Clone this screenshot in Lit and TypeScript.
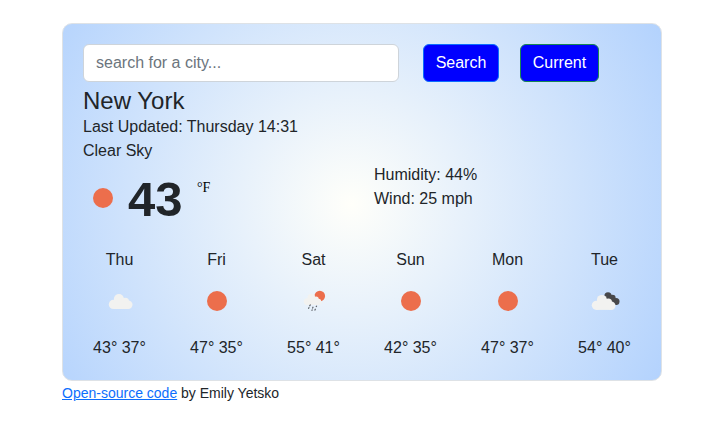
import { LitElement, html, css, svg } from "lit";
import { customElement } from "lit/decorators.js";

type Icon = "sun" | "cloud" | "rain" | "broken";

const cloud = (transform: string) => svg`
  <g transform=${transform} fill="#f2f2f0">
    <circle cx="18.4" cy="28.4" r="4.6"/>
    <circle cx="23.9" cy="23" r="5"/>
    <circle cx="30.3" cy="25.4" r="3.7"/>
    <circle cx="33.3" cy="28.8" r="4.2"/>
    <path d="M18.4 25h15v8h-15z"/>
  </g>`;

const shapes = {
  sun: svg`<circle cx="25" cy="25" r="10" fill="#ec6e4c"/>`,
  cloud: cloud(""),
  rain: svg`
    <circle cx="30.8" cy="20" r="5.3" fill="#ec6e4c"/>
    ${cloud("translate(4.6 4.3) scale(.74 .75)")}
    <path d="M21.5 28.5l-1 1.8M20.2 31.200l-.8 1.6M24.200 30.8l-.8 1.6M27.8 29.7l-.8 1.4M23.4 33.4l-.7 1.4M26.5 32.8l-.8 1.6" stroke="#54585e" stroke-width="1.1" fill="none"/>`,
  broken: svg`
    <g fill="#48484a">
      <circle cx="28" cy="19.9" r="3.6"/>
      <circle cx="32.3" cy="22.2" r="3.4"/>
      <circle cx="36" cy="25.6" r="3.5"/>
      <path d="M25 21l6-1 6 5v4h-5z"/>
    </g>
    ${cloud("translate(-2 .9)")}`,
};

const icon = (name: Icon) =>
  html`<svg class="icon" viewBox="0 0 50 50" aria-hidden="true">${shapes[name]}</svg>`;

const forecast: { day: string; icon: Icon; max: number; min: number }[] = [
  { day: "Thu", icon: "cloud", max: 43, min: 37 },
  { day: "Fri", icon: "sun", max: 47, min: 35 },
  { day: "Sat", icon: "rain", max: 55, min: 41 },
  { day: "Sun", icon: "sun", max: 42, min: 35 },
  { day: "Mon", icon: "sun", max: 47, min: 37 },
  { day: "Tue", icon: "broken", max: 54, min: 40 },
];

@customElement("app-root")
export class AppRoot extends LitElement {
  static styles = css`
    :host {
      display: block;
      width: 600px;
      margin: 0 auto;
      padding: 23px 0 0 5px;
      font: 16px/24px "Liberation Sans", Arial, sans-serif;
      color: #212529;
    }
    * { box-sizing: border-box; }
    .card {
      height: 358px;
      padding: 20px;
      border: 1px solid #dee2e6;
      border-radius: 10px;
      background: radial-gradient(circle at 48.2% 50.5%, rgb(255, 255, 250) 0%, rgb(160, 199, 254) 125%);
    }
    .search { display: flex; }
    .field {
      width: 316px;
      height: 38px;
      margin-right: 24px;
      padding: 6px 12px;
      border: 1px solid #ced4da;
      border-radius: 6px;
      background: #fff;
      font: inherit;
    }
    .field::placeholder { color: #6c757d; opacity: 1; }
    .button {
      width: 76px;
      height: 38px;
      margin-right: 21px;
      padding: 6px 0;
      border: 1px solid #0d6efd;
      border-radius: 6px;
      background: #00f;
      color: #fff;
      font: inherit;
    }
    .button.current { width: 79px; border-color: #198754; }
    .city { margin: 4px 0 0; font-size: 24px; line-height: 29px; font-weight: 400; }
    .now { display: grid; grid-template-columns: 291px 1fr; height: 72px; }
    .reading { display: flex; align-items: flex-start; }
    .reading .icon { margin: 10px 0 0 -5px; }
    .temperature { font-size: 49px; line-height: 72px; font-weight: 700; }
    .unit { margin: 13px 0 0 14.5px; font: 14px/24px "Liberation Serif", serif; color: #000; }
    .icon { display: block; width: 50px; height: 50px; flex: none; }
    .forecast { display: grid; grid-template-columns: repeat(6, 1fr); margin: 13px -12px 0; }
    .day { display: flex; flex-direction: column; align-items: center; }
    .day .icon { margin: 4px 0 10px; }
    .credit { font-size: 14px; line-height: 24px; }
    .credit a { color: #0d6efd; text-decoration: underline; }
  `;

  render() {
    return html`
      <section class="card">
        <form class="search" @submit=${(e: Event) => e.preventDefault()}>
          <input class="field" type="search" placeholder="search for a city..." />
          <button class="button">Search</button>
          <button class="button current" type="button">Current</button>
        </form>
        <h1 class="city">New York</h1>
        <div>Last Updated: Thursday 14:31</div>
        <div>Clear Sky</div>
        <div class="now">
          <div class="reading">
            ${icon("sun")}
            <span class="temperature">43</span>
            <span class="unit">°F</span>
          </div>
          <div>
            <div>Humidity: 44%</div>
            <div>Wind: 25 mph</div>
          </div>
        </div>
        <div class="forecast">
          ${forecast.map(
            (d) => html`<div class="day">
              <span>${d.day}</span>
              ${icon(d.icon)}
              <span>${d.max}° ${d.min}°</span>
            </div>`
          )}
        </div>
      </section>
      <div class="credit"><a href="#">Open-source code</a> by Emily Yetsko</div>
    `;
  }
}
